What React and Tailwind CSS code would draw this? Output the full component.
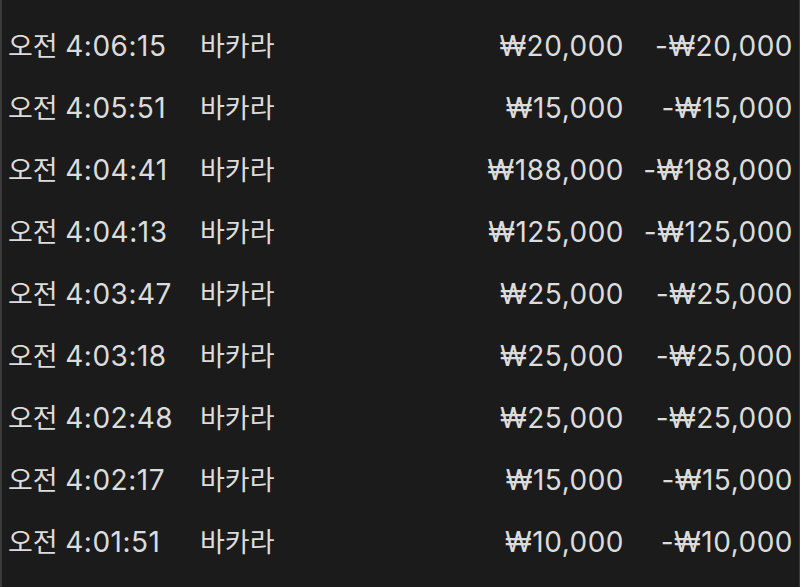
const rows = [
  ["4:06:15", "₩20,000", "-₩20,000"],
  ["4:05:51", "₩15,000", "-₩15,000"],
  ["4:04:41", "₩188,000", "-₩188,000"],
  ["4:04:13", "₩125,000", "-₩125,000"],
  ["4:03:47", "₩25,000", "-₩25,000"],
  ["4:03:18", "₩25,000", "-₩25,000"],
  ["4:02:48", "₩25,000", "-₩25,000"],
  ["4:02:17", "₩15,000", "-₩15,000"],
  ["4:01:51", "₩10,000", "-₩10,000"],
];

export default function App() {
  return (
    <div
      className="w-[800px] h-[587px] overflow-hidden bg-[#1b1b1b] border-l-2 border-r border-[#3a3a3a] text-[#dcdcdc] text-[27px]"
      style={{ fontFamily: "Inter, 'Noto Sans CJK KR', sans-serif" }}
    >
      <div className="pt-[15px] pl-[6px] pr-[6px]">
        {rows.map((r, i) => (
          <div key={i} className="h-[62px] flex items-center leading-none">
            <div className="w-[192px] whitespace-nowrap">
              오전 <span className="text-[28px] tracking-[0.5px]">{r[0]}</span>
            </div>
            <div className="flex-1">바카라</div>
            <div className="w-[170px] text-right text-[28px] tracking-[0.5px]">{r[1]}</div>
            <div className="w-[169px] text-right text-[28px] tracking-[0.5px]">{r[2]}</div>
          </div>
        ))}
      </div>
    </div>
  );
}
